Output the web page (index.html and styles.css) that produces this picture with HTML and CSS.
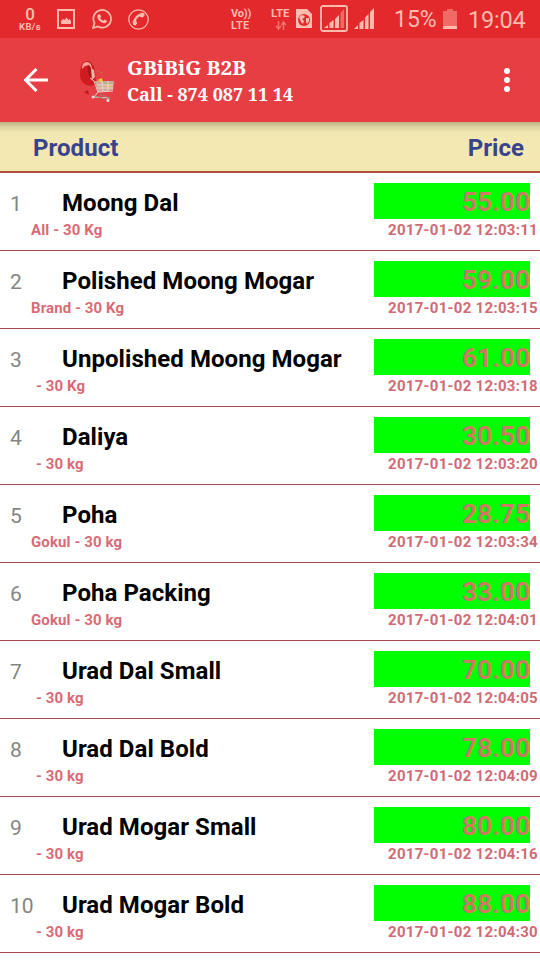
FILE: index.html
```html
<!DOCTYPE html>
<html lang="en">
<head>
  <meta charset="UTF-8">
  <title>GBiBiG B2B</title>
  <link rel="stylesheet" href="styles.css">
</head>
<body>
  <div class="statusbar">
    <div class="speed"><b>0</b><span>KB/s</span></div>
    <svg class="ico-picture" width="18" height="20" viewBox="0 0 18 20"><rect x="1" y="1" width="16" height="18" fill="none" stroke="currentColor" stroke-width="2"/><path d="M4 15v-3l2-2 1.500 1L9.500 8.500l2 2.500 1-1L14 12v3z" fill="currentColor"/></svg>
    <svg class="ico-whatsapp" width="20" height="20" viewBox="0 0 20 20"><path d="M1 19l1.500-5a8.800 8.800 0 1 1 3.500 3.500z" fill="none" stroke="currentColor" stroke-width="1.700"/><path d="M6.500 5.500l1.500-.3 1.200 2.600-1 1.200c.7 1.400 1.700 2.200 3.200 2.800l1.100-1.300 2.400 1.200c.2 1.500-1.200 2.600-2.600 2.500-3.600-.5-7.300-4-7-7 .1-.8.500-1.400 1.200-1.700z" fill="currentColor"/></svg>
    <svg class="ico-call" width="21" height="21" viewBox="0 0 21 21"><circle cx="10.500" cy="10.500" r="9.700" fill="none" stroke="currentColor" stroke-width="1.300"/><path d="M6.500 14c0-4.500 3-8 7.500-8.500" fill="none" stroke="currentColor" stroke-width="2.600"/><path d="M12.500 3.800l3.500.5.800 2-2.200 2.200-2.600-.8zM4.500 12l3.500-.4 1.200 2.900-2 2.200-2-.9z" fill="currentColor"/></svg>
    <div class="volte"><span>Vo))</span><span>LTE</span></div>
    <div class="lte"><span>LTE</span><svg width="12" height="9" viewBox="0 0 12 9"><path d="M3.500 0v8M1 5l2.500 3L6 5M8.500 9V1M6.500 4l2-3 2.500 3" fill="none" stroke="currentColor" stroke-width="1.500"/></svg></div>
    <svg class="ico-sim" width="16" height="19" viewBox="0 0 16 19"><path d="M0 0h11l5 5v14H0z" fill="currentColor"/><circle cx="8" cy="11" r="6" fill="#e4292d"/><path d="M3 8l3-2 3 1-1 2-2 1 2 2-1 3-2-2zM10 9l3 0v3l-2 3-1-2z" fill="currentColor"/></svg>
    <svg class="ico-signal1" width="28" height="27" viewBox="0 0 28 27"><rect x="1" y="1" width="26" height="25" rx="2" fill="none" stroke="currentColor" stroke-width="1.800"/><path d="M4 23l4-3v3zM9.500 23v-5l4-3v8zM15 23v-9l4-4v13z" fill="currentColor"/><path d="M20.500 23V8l3.500-4v19z" fill="currentColor" opacity=".45"/></svg>
    <svg class="ico-signal2" width="20" height="21" viewBox="0 0 20 21"><path d="M0 21l4-4v4zM5.500 21v-6l4-3v9zM11 21V9.500l3.500-3.500v15zM16 21V4l4-4v21z" fill="currentColor"/></svg>
    <span class="percent">15%</span>
    <svg class="ico-battery" width="14" height="20" viewBox="0 0 14 20"><path d="M4 0h6v2h4v18H0V2h4z" fill="currentColor" opacity=".45"/><path d="M0 17h14v3H0z" fill="currentColor"/></svg>
    <span class="clock">19:04</span>
  </div>

  <div class="appbar">
    <svg class="back" width="24" height="24" viewBox="0 0 24 24"><path d="M24 12H2M12.500 1L1.500 12l11 11" fill="none" stroke="currentColor" stroke-width="3"/></svg>
    <svg class="logo" width="36" height="43" viewBox="0 0 36 43">
      <path d="M0 15C0 6 3 1 7 1c5 0 8 6 8 12l1 11-5 2c-7-1-11-5-11-11z" fill="#d01c20"/>
      <path d="M2 9c0-5 2-7 5-7s5 3 5 7L9 5 5 6z" fill="#f4a094"/>
      <path d="M8 5c3 3 4 8 3 13-3-3-4-8-3-13z" fill="#a81518"/>
      <path d="M11 8l3 2 1 7-3 3z" fill="#efb3a6"/>
      <path d="M17 11l6 2" stroke="#c06a4c" stroke-width="1"/>
      <path d="M4 32l4-2 1 5z" fill="#c01c20"/>
      <path d="M15 21l19 0-1 9-15 2z" fill="#cfa898"/>
      <path d="M17 20l5-2 1 5zM24 26l6-2 1 3z" fill="#edc53d"/>
      <path d="M24 22l7-1-1 3-5 1z" fill="#b5b394"/>
      <path d="M10 18l4 3 4 11 15-1M17 25h16M18 28h15M22 21l1 10M28 21v10M18 32l-4 5 16 1" fill="none" stroke="#ead3cd" stroke-width="1"/>
      <path d="M15 36l14 4M19 34l11 4" fill="none" stroke="#a07a7a" stroke-width="1"/>
      <circle cx="13" cy="37" r="1.500" fill="#e5dede"/><circle cx="28" cy="40.500" r="1.500" fill="#e5dede"/>
    </svg>
    <div class="title"><b class="name">GBiBiG B2B</b><b class="call">Call - 874 087 11 14</b></div>
    <svg class="menu" width="6" height="24" viewBox="0 0 6 24"><circle cx="3" cy="3" r="3" fill="currentColor"/><circle cx="3" cy="12" r="3" fill="currentColor"/><circle cx="3" cy="21" r="3" fill="currentColor"/></svg>
  </div>

  <div class="list-head"><span>Product</span><span>Price</span></div>

  <div id="list"></div>

  <script>
    const products = [
      ['Moong Dal', 'All - 30 Kg', '55.00', '12:03:11'],
      ['Polished Moong Mogar', 'Brand - 30 Kg', '59.00', '12:03:15'],
      ['Unpolished Moong Mogar', '- 30 Kg', '61.00', '12:03:18'],
      ['Daliya', '- 30 kg', '30.50', '12:03:20'],
      ['Poha', 'Gokul - 30 kg', '28.75', '12:03:34'],
      ['Poha Packing', 'Gokul - 30 kg', '33.00', '12:04:01'],
      ['Urad Dal Small', '- 30 kg', '70.00', '12:04:05'],
      ['Urad Dal Bold', '- 30 kg', '78.00', '12:04:09'],
      ['Urad Mogar Small', '- 30 kg', '80.00', '12:04:16'],
      ['Urad Mogar Bold', '- 30 kg', '88.00', '12:04:30']
    ];

    document.getElementById('list').innerHTML = products.map((p, i) => `
      <div class="row">
        <div class="item">
          <div class="line"><span class="no">${i + 1}</span><span class="product">${p[0]}</span></div>
          <div class="pack${p[1][0] === '-' ? ' no-brand' : ''}">${p[1]}</div>
        </div>
        <div class="rate">
          <div class="price">${p[2]}</div>
          <div class="time">2017-01-02 ${p[3]}</div>
        </div>
      </div>`).join('');
  </script>
</body>
</html>
```

FILE: styles.css
```css
* { box-sizing: border-box; }
body { margin: 0; height: 960px; overflow: hidden; background: #fff; font-family: Roboto, sans-serif; }
svg { display: block; flex: none; }

.statusbar { display: flex; height: 38px; background: #e4292d; color: #ffbcae; align-items: flex-start; white-space: nowrap; }
.speed { width: 24px; margin: 6px 0 0 18px; display: flex; flex-direction: column; align-items: center; }
.speed b { font-size: 17px; line-height: 16px; font-weight: 500; }
.speed span { font-size: 9.5px; line-height: 10px; font-weight: 700; letter-spacing: 0.4px; }
.ico-picture { margin: 9px 0 0 15px; }
.ico-whatsapp { margin: 9px 0 0 17px; }
.ico-call { margin: 9px 0 0 16px; }
.volte { width: 20px; margin: 8px 0 0 82px; font-size: 11px; line-height: 12px; font-weight: 700; display: flex; flex-direction: column; }
.volte span { letter-spacing: -0.2px; }
.volte span + span { letter-spacing: 0.2px; }
.lte { width: 20px; margin: 7px 0 0 20px; font-size: 11.5px; line-height: 12px; font-weight: 700; }
.lte svg { margin: 2px 0 0 4px; opacity: .5; }
.ico-sim { margin: 9px 0 0 5px; }
.ico-signal1 { margin: 5px 0 0 8px; }
.ico-signal2 { margin: 8px 0 0 6px; }
.percent { width: 43px; margin: 7px 0 0 20px; font-size: 23px; line-height: 26px; font-weight: 400; }
.ico-battery { margin: 9px 0 0 6px; }
.clock { margin: 7px 0 0 11px; font-size: 23.5px; line-height: 26px; font-weight: 400; letter-spacing: -0.2px; }

.appbar { display: flex; height: 84px; padding: 0 30px 0 24px; background: #e63e43; color: #fff; align-items: center; }
.logo { margin: 2px 0 0 32px; }
.title { flex: 1; margin: 2px 0 0 11px; font-family: "Noto Serif", "DejaVu Serif Condensed", "DejaVu Serif", serif; white-space: nowrap; }
.title b { display: block; line-height: 27px; }
.name { font-size: 20.7px; }
.call { font-size: 18px; }

.list-head { display: flex; justify-content: space-between; height: 51px; padding: 12px 16px 0 33px; border-bottom: 2px solid #b05040; background: linear-gradient(#bdb386, #ddd3a0 5px, #f3e8b2 11px, #f3e8b2); color: #38438e; font-size: 24px; line-height: 28px; font-weight: 700; letter-spacing: 0.06px; }

.row { display: flex; justify-content: space-between; height: 78px; border-bottom: 1px solid #a94a50; padding-top: 10px; }
.line { display: flex; line-height: 40px; height: 40px; }
.no { width: 52px; margin-left: 10px; color: #858585; font-size: 21px; padding-top: 1px; }
.product { color: #000; font-size: 24px; font-weight: 700; letter-spacing: 0.06px; white-space: nowrap; }
.pack { margin-left: 31px; color: #d96b75; font-size: 15px; line-height: 14px; font-weight: 700; letter-spacing: 0.1px; }
.no-brand { margin-left: 36px; }
.rate { width: 166px; }
.price { width: 156px; height: 36px; background: #0f0; color: #cb7962; font-size: 26px; line-height: 39px; font-weight: 700; letter-spacing: 0.15px; text-align: right; }
.time { margin: 4px 2px 0 0; color: #d06b74; font-size: 15px; line-height: 14px; font-weight: 700; letter-spacing: 0.29px; text-align: right; white-space: nowrap; }
```
